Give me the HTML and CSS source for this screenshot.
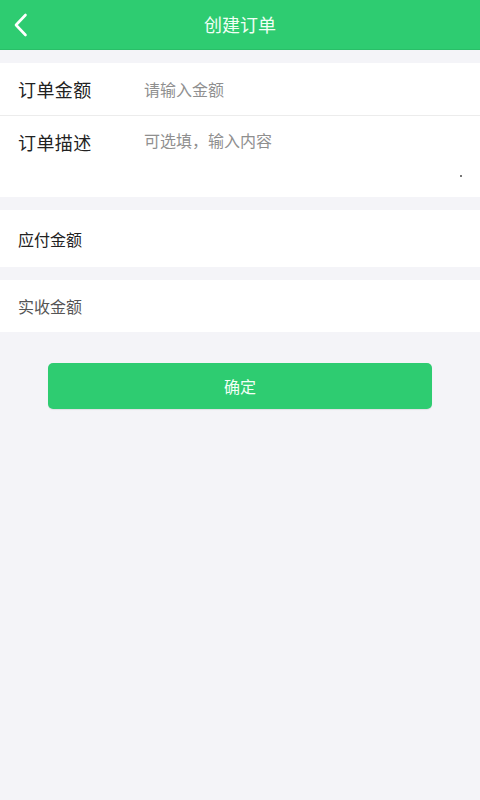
FILE: index.html
```html
<!DOCTYPE html>
<html lang="zh-CN">
<head>
<meta charset="utf-8">
<title>创建订单</title>
<link rel="stylesheet" href="styles.css">
</head>
<body>
<header class="topbar">
  <span class="back">
    <svg width="14" height="24" viewBox="0 0 14 24"><path d="M11.5 2 L2 12 L11.5 22" fill="none" stroke="#fff" stroke-width="2.6" stroke-linecap="round" stroke-linejoin="round"/></svg>
  </span>
  <h1 class="title">创建订单</h1>
</header>

<section class="card">
  <div class="row row-amount">
    <span class="label">订单金额</span>
    <span class="placeholder">请输入金额</span>
  </div>
  <div class="row row-desc">
    <span class="label">订单描述</span>
    <span class="placeholder">可选填，输入内容</span>
    <span class="grip"></span>
  </div>
</section>

<section class="card">
  <div class="row row-pay">
    <span class="label-sm">应付金额</span>
  </div>
</section>

<section class="card">
  <div class="row row-recv">
    <span class="label-sm muted">实收金额</span>
  </div>
</section>

<div class="actions">
  <button class="confirm">确定</button>
</div>
</body>
</html>
```

FILE: styles.css
```css
* { box-sizing: border-box; }
html, body {
  margin: 0;
  padding: 0;
  background: #f4f4f8;
  font-family: "Noto Sans CJK SC", "Noto Sans", sans-serif;
  height: 100%;
}
.topbar {
  height: 50px;
  background: #2ecc71;
  display: flex;
  align-items: center;
  justify-content: center;
  position: relative;
  border-bottom: 1px solid #29bf68;
}
.back {
  position: absolute;
  left: 14px;
  top: 13px;
  width: 14px;
  height: 24px;
  display: block;
}
.back svg { display: block; }
.title {
  margin: 0;
  font-size: 18px;
  font-weight: normal;
  color: #f2fff6;
  line-height: 24px;
  padding-bottom: 2px;
}
.card {
  background: #fff;
  margin-top: 13px;
}
.row {
  display: flex;
  padding-left: 18px;
  position: relative;
}
.row-amount {
  height: 53px;
  align-items: center;
  border-bottom: 1px solid #ececec;
}
.row-desc {
  height: 81px;
  align-items: flex-start;
}
.label {
  width: 126px;
  font-size: 18px;
  line-height: 26px;
  color: #222;
  letter-spacing: 0.4px;
}
.row-desc .label { padding-top: 13px; line-height: 26px; }
.placeholder {
  font-size: 16px;
  line-height: 24px;
  color: #8f8f8f;
}
.row-desc .placeholder { padding-top: 12px; }
.grip {
  position: absolute;
  right: 18px;
  top: 59px;
  width: 2px;
  height: 2px;
  background: #777;
}
.row-pay {
  height: 57px;
  align-items: center;
}
.row-recv {
  height: 52px;
  align-items: center;
}
.label-sm {
  font-size: 16px;
  line-height: 24px;
  color: #222;
}
.label-sm.muted { color: #555; }
.actions {
  padding: 31px 48px 0;
}
.confirm {
  display: block;
  width: 100%;
  height: 46px;
  border: none;
  border-radius: 5px;
  background: #2ecc71;
  color: #f2fff6;
  font-family: "Noto Sans CJK SC", "Noto Sans", sans-serif;
  font-size: 16px;
  box-shadow: 0 1px 1px rgba(0,0,0,0.08);
}
```
